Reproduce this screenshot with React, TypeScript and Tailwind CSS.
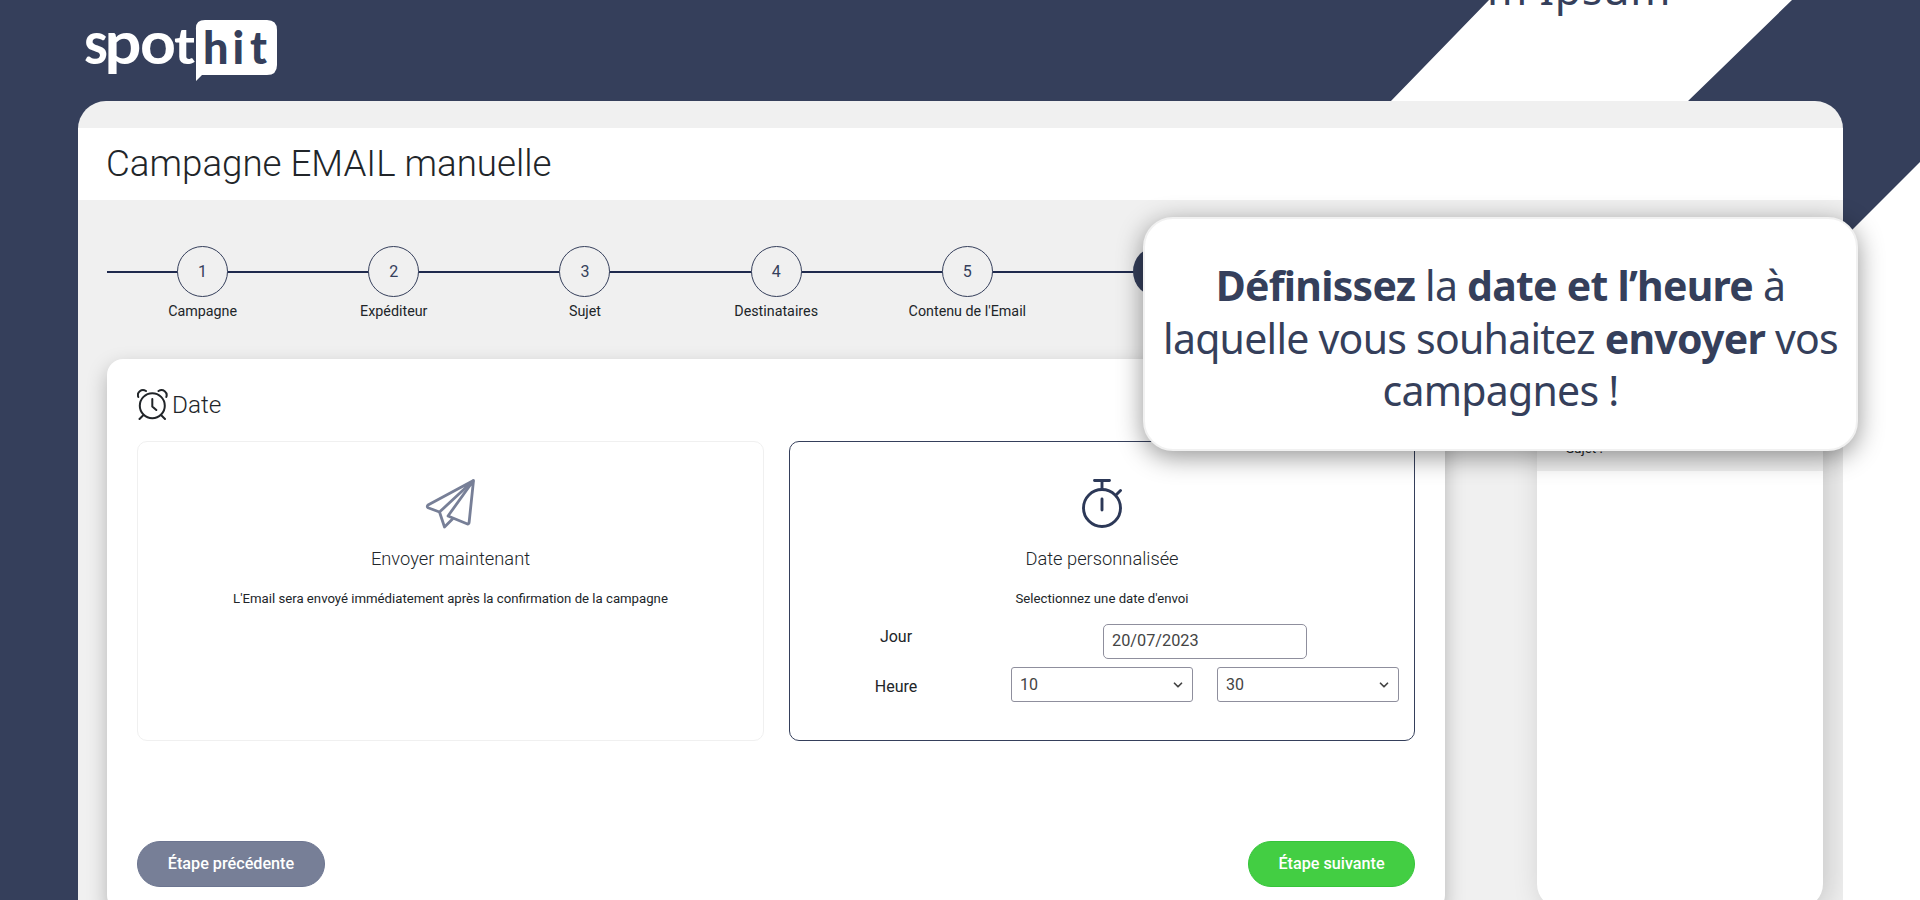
import { ChevronDown } from "lucide-react";
import type { ReactNode } from "react";

const steps = ["Campagne", "Expéditeur", "Sujet", "Destinataires", "Contenu de l'Email"];

function Logo() {
  return (
    <svg className="block" width="200" height="64" viewBox="0 0 200 64" fill="#fff">
      <path d="M121 0H183q10 0 10 10V45q0 10-10 10H118l-6 6V10Q111 0 121 0Z" />
      <g fontFamily="Lato, sans-serif" fontWeight="700" fontSize="59">
        <text x="0" y="44" textLength="24" lengthAdjust="spacingAndGlyphs">s</text>
        <text x="20.500" y="44" textLength="37" lengthAdjust="spacingAndGlyphs">p</text>
        <text x="56" y="44" textLength="36" lengthAdjust="spacingAndGlyphs">o</text>
        <text x="90" y="44" textLength="21" lengthAdjust="spacingAndGlyphs" fontSize="50">t</text>
      </g>
      <g fontFamily="Lato, sans-serif" fontWeight="900" fontSize="45" fill="#353f5b">
        <text x="119" y="44">h</text>
        <text x="148.500" y="44">i</text>
        <text x="166" y="44">t</text>
      </g>
    </svg>
  );
}

function AlarmIcon() {
  return (
    <svg width="31" height="32" viewBox="0 0 31 32" fill="none" stroke="#212529" strokeWidth="2" strokeLinecap="round">
      <circle cx="15.300" cy="16.700" r="12.500" />
      <path d="M15.300 10v7.500l4 3.500M6 26.500 2.500 30M24.500 26.500l3.500 3.500M1.300 8C-.5 3.500 4.500-.8 9 2M29.300 8C31 3.500 26-.8 21.500 2" />
    </svg>
  );
}

function PlaneIcon() {
  return (
    <svg width="52" height="52" viewBox="0 0 52 52" fill="none" stroke="#777f97" strokeWidth="2.8" strokeLinejoin="round">
      <path d="M48.500 2.500 3 27q-1.500 1.500 0 2.800L14.500 34 19.500 49 28 40.500M14.500 34 48.500 2.500" />
      <path d="M48.500 2.500 23 38 42.500 46q1.500 0 1.600-1.500Z" />
    </svg>
  );
}

function StopwatchIcon() {
  return (
    <svg width="42" height="52" viewBox="0 0 42 52" fill="none" stroke="#2c3857" strokeWidth="2.900" strokeLinecap="round">
      <circle cx="21" cy="30" r="18.500" />
      <path d="M21 21v11M21 2.500v9M13.500 2.500h15M35.500 16.500l4-4" />
    </svg>
  );
}

function Choice({ icon, title, text, active, children }: { icon: ReactNode; title: string; text: string; active?: boolean; children?: ReactNode }) {
  return (
    <div className={`flex h-[300px] flex-col items-center rounded-[10px] border pt-[36px] ${active ? "border-[#353f5b]" : "border-[#f0f0f0]"}`}>
      {icon}
      <h3 className="mt-[15px] text-[18.3px] leading-[27px] font-light">{title}</h3>
      <p className="mt-[17px] text-[13.2px] leading-[20px]">{text}</p>
      {children}
    </div>
  );
}

function Select({ value }: { value: string }) {
  return (
    <div className="flex h-[35px] w-[182px] items-center justify-between rounded-[3px] border border-[#8f8f9d] pr-[7px] pl-[8px] text-[16px] text-[#444]">
      <span>{value}</span>
      <ChevronDown size={14} strokeWidth={3} />
    </div>
  );
}

export default function App() {
  return (
    <div className="relative h-[900px] w-[1920px] overflow-hidden bg-[#353f5b] pl-[78px] font-['Roboto',sans-serif] text-[#212529]">
      <svg className="absolute top-0 left-0" width="1920" height="900" fill="#fff">
        <path d="M1489 0H1792L1687 102H1390ZM1920 162V900H1800V282Z" />
      </svg>
      <div className="absolute top-[-38px] left-[1487px] font-['Noto_Sans',sans-serif] text-[43px] leading-[53px] tracking-[0.6px] whitespace-pre text-[#353f5b]">m Ipsum</div>

      <header className="relative h-[101px] pt-[20px] pl-[6px]">
        <Logo />
      </header>

      <div className="relative h-[799px] w-[1765px] overflow-hidden rounded-t-[28px] bg-[#f0f0f0] pt-[27px]">
        <h1 className="h-[72px] bg-white pl-[28px] text-[36.7px] leading-[71px] font-light">Campagne EMAIL manuelle</h1>

        <div className="relative mt-[46px] ml-[29px] flex w-[1338px]">
          <div className="absolute top-[25px] left-0 h-[2px] w-full bg-[#1f2a4d]" />
          {steps.map((label, i) => (
            <div key={label} className="relative flex w-[191.2px] shrink-0 flex-col items-center">
              <span className="flex size-[51px] items-center justify-center rounded-full border border-[#353f5b] bg-[#f0f0f0] text-[16px] text-[#353f5b]">{i + 1}</span>
              <span className="mt-[3px] text-[14.3px] leading-[22px]">{label}</span>
            </div>
          ))}
          <div className="relative ml-[70px] size-[51px] rounded-full bg-[#353f5b]" />
        </div>

        <div className="mt-[37px] flex items-start gap-[92px] pl-[29px]">
          <main className="h-[552px] w-[1338px] rounded-[16px] bg-white px-[30px] pt-[30px] shadow-[0_8px_20px_rgba(0,0,0,0.25)]">
            <h2 className="flex h-[32px] items-center gap-[4px] text-[24.3px] font-light">
              <AlarmIcon />
              <span>Date</span>
            </h2>
            <div className="mt-[20px] grid grid-cols-[627px_626px] gap-[25px]">
              <Choice icon={<PlaneIcon />} title="Envoyer maintenant" text="L'Email sera envoyé immédiatement après la confirmation de la campagne" />
              <Choice active icon={<StopwatchIcon />} title="Date personnalisée" text="Selectionnez une date d'envoi">
                <div className="mt-[15px] flex w-full pl-[15px] text-[16px]">
                  <div className="flex w-[182px] flex-col items-center pt-[1px] leading-[24px]">
                    <span>Jour</span>
                    <span className="mt-[26px]">Heure</span>
                  </div>
                  <div className="ml-[24px] flex flex-col items-center gap-[8px]">
                    <div className="flex h-[35px] w-[204px] items-center rounded-[5px] border border-[#8f8f9d] pl-[8px] text-[16.3px] text-[#444]">20/07/2023</div>
                    <div className="flex gap-[24px]">
                      <Select value="10" />
                      <Select value="30" />
                    </div>
                  </div>
                </div>
              </Choice>
            </div>
            <div className="mt-[100px] flex justify-between text-[16.200px] font-medium text-white">
              <button className="h-[46px] w-[188px] rounded-full border border-[#6c7590] bg-[#777f97]">Étape précédente</button>
              <button className="h-[46px] w-[167px] rounded-full border border-[#35c43a] bg-[#43ce43]">Étape suivante</button>
            </div>
          </main>
          <aside className="h-[549px] w-[286px] overflow-hidden rounded-[24px] bg-white shadow-[6px_4px_30px_rgba(0,0,0,0.17)]">
            <div className="h-[112px] bg-[#f0f0f0] pt-[79px] pl-[29px] text-[13.500px] leading-[20px]">Sujet :</div>
          </aside>
        </div>
      </div>

      <div className="absolute top-[217px] left-[1143px] h-[234px] w-[715px] rounded-[30px] border-2 border-[#f1f1f1] bg-white pt-[40px] text-center font-['Noto_Sans',sans-serif] text-[41px] leading-[52.500px] tracking-[-0.75px] whitespace-nowrap text-[#353f5b] shadow-[0_6px_26px_rgba(0,0,0,0.42)]">
        <p><b>Définissez</b> la <b>date et l’heure</b> à</p>
        <p>laquelle vous souhaitez <b>envoyer</b> vos</p>
        <p>campagnes !</p>
      </div>
    </div>
  );
}
